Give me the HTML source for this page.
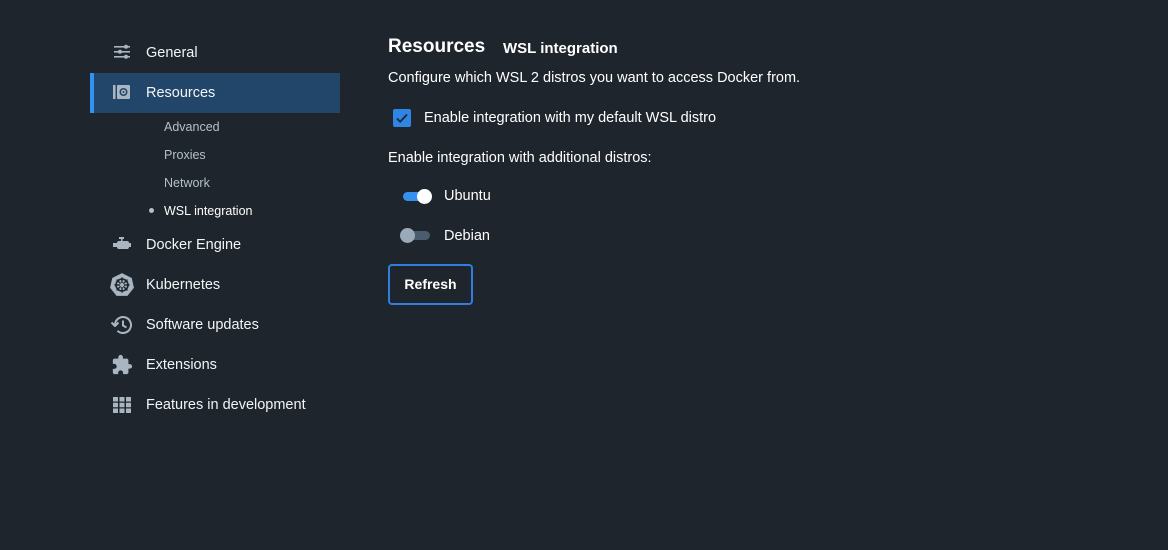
<!DOCTYPE html>
<html><head><meta charset="utf-8"><style>
*{margin:0;padding:0;box-sizing:border-box}
body{width:1168px;height:550px;background:#1e252c;font-family:"Liberation Sans",sans-serif;color:#fff;position:relative;overflow:hidden}
.a{position:absolute;white-space:nowrap}
.item{font-size:14.5px;color:#f2f5f7}
.sub{font-size:12.5px;color:#b4c0ca}
.ic{position:absolute}
</style></head><body>
<div class="a" style="left:90px;top:73px;width:250px;height:40px;background:#22466a"></div>
<div class="a" style="left:90px;top:73px;width:4px;height:40px;background:#3391f2"></div>

<svg class="ic" style="left:112px;top:44px" width="20" height="16" viewBox="0 0 20 16" fill="#a9b6c1"><rect x="2" y="2" width="16" height="1.6"/><rect x="2" y="7" width="16" height="1.6"/><rect x="2" y="12" width="16" height="1.6"/><circle cx="14" cy="2.8" r="2"/><circle cx="8" cy="7.8" r="2"/><circle cx="14" cy="12.8" r="2"/></svg>
<div class="a item" style="left:146px;top:45px">General</div>

<svg class="ic" style="left:112px;top:84px" width="20" height="16" viewBox="0 0 20 16"><rect x="1" y="1" width="2.5" height="14" fill="#a9b6c1"/><rect x="5" y="1" width="13" height="14" rx="1" fill="#a9b6c1"/><circle cx="11.5" cy="8" r="4" fill="#22466a"/><circle cx="11.5" cy="8" r="2.5" fill="#a9b6c1"/><circle cx="11.5" cy="8" r="1" fill="#22466a"/></svg>
<div class="a item" style="left:146px;top:85px">Resources</div>

<div class="a sub" style="left:164px;top:120px">Advanced</div>
<div class="a sub" style="left:164px;top:148px">Proxies</div>
<div class="a sub" style="left:164px;top:176px">Network</div>
<div class="a" style="left:149px;top:208px;width:5px;height:5px;border-radius:50%;background:#b4c0ca"></div>
<div class="a sub" style="left:164px;top:204px;color:#fff">WSL integration</div>

<svg class="ic" style="left:112px;top:236px" width="20" height="16" viewBox="0 0 20 16" fill="#a9b6c1"><rect x="7" y="1" width="5" height="2"/><rect x="9" y="2" width="1.5" height="3"/><rect x="5" y="5" width="12" height="8" rx="2"/><rect x="1" y="7" width="4" height="4"/><rect x="17" y="7" width="2" height="4"/></svg>
<div class="a item" style="left:146px;top:237px">Docker Engine</div>

<svg class="ic" style="left:109px;top:272px" width="26" height="26" viewBox="0 0 24 24"><polygon points="12,1 21,5.5 23,14.5 17,22 7,22 1,14.5 3,5.5" fill="#a9b6c1"/><circle cx="12" cy="12" r="5.5" fill="none" stroke="#1e252c" stroke-width="1.5"/><g stroke="#1e252c" stroke-width="1.3"><line x1="12" y1="5" x2="12" y2="19"/><line x1="5" y1="12" x2="19" y2="12"/><line x1="7" y1="7" x2="17" y2="17"/><line x1="17" y1="7" x2="7" y2="17"/></g><circle cx="12" cy="12" r="1.8" fill="#a9b6c1"/></svg>
<div class="a item" style="left:146px;top:277px">Kubernetes</div>

<svg class="ic" style="left:110px;top:314px" width="24" height="22" viewBox="0 0 24 22" fill="none" stroke="#a9b6c1" stroke-width="2"><path d="M5 11a8 8 0 1 1 2.5 5.8"/><path d="M1.5 8.5L5 12l3.5-3.5" stroke-linejoin="round"/><path d="M13 6.5v5l3.5 2"/></svg>
<div class="a item" style="left:146px;top:317px">Software updates</div>

<svg class="ic" style="left:111px;top:354px" width="22" height="22" viewBox="0 0 24 24" fill="#a9b6c1"><path d="M20.5 11H19V7c0-1.1-.9-2-2-2h-4V3.5a2.5 2.5 0 0 0-5 0V5H4c-1.1 0-2 .9-2 2v3.8h1.5c1.5 0 2.7 1.2 2.7 2.7S5 16.2 3.5 16.2H2V20c0 1.1.9 2 2 2h3.8v-1.5c0-1.5 1.2-2.7 2.7-2.7s2.7 1.2 2.7 2.7V22H17c1.1 0 2-.9 2-2v-4h1.5a2.5 2.5 0 0 0 0-5z"/></svg>
<div class="a item" style="left:146px;top:357px">Extensions</div>

<svg class="ic" style="left:113px;top:397px" width="18" height="16" viewBox="0 0 18 16" fill="#a9b6c1"><rect x="0" y="0" width="5" height="4.5"/><rect x="6.5" y="0" width="5" height="4.5"/><rect x="13" y="0" width="5" height="4.5"/><rect x="0" y="5.75" width="5" height="4.5"/><rect x="6.5" y="5.75" width="5" height="4.5"/><rect x="13" y="5.75" width="5" height="4.5"/><rect x="0" y="11.5" width="5" height="4.5"/><rect x="6.5" y="11.5" width="5" height="4.5"/><rect x="13" y="11.5" width="5" height="4.5"/></svg>
<div class="a item" style="left:146px;top:397px">Features in development</div>

<div class="a" style="left:388px;top:36px;font-size:19px;font-weight:bold">Resources</div>
<div class="a" style="left:503px;top:40px;font-size:15px;font-weight:bold">WSL integration</div>
<div class="a" style="left:388px;top:70px;font-size:14.5px">Configure which WSL 2 distros you want to access Docker from.</div>

<div class="a" style="left:393px;top:109px;width:18px;height:18px;background:#2f85e3;border-radius:2px"></div>
<svg class="ic" style="left:393px;top:109px" width="18" height="18" viewBox="0 0 18 18"><path d="M4 9.5l3.2 3.2L14 5.5" fill="none" stroke="#1a2530" stroke-width="1.8"/></svg>
<div class="a" style="left:424px;top:110px;font-size:14.5px">Enable integration with my default WSL distro</div>
<div class="a" style="left:388px;top:150px;font-size:14.5px">Enable integration with additional distros:</div>

<div class="a" style="left:403px;top:192px;width:27px;height:9px;border-radius:5px;background:#3590ee"></div>
<div class="a" style="left:417px;top:189px;width:15px;height:15px;border-radius:50%;background:#fff"></div>
<div class="a" style="left:444px;top:188px;font-size:14.5px">Ubuntu</div>

<div class="a" style="left:403px;top:231px;width:27px;height:9px;border-radius:5px;background:#4a5c6e"></div>
<div class="a" style="left:400px;top:228px;width:15px;height:15px;border-radius:50%;background:#9aaab8"></div>
<div class="a" style="left:444px;top:228px;font-size:14.5px">Debian</div>

<div class="a" style="left:388px;top:264px;width:85px;height:41px;border:2px solid #2f7ee0;border-radius:4px;font-size:14px;font-weight:bold;text-align:center;line-height:37px">Refresh</div>
</body></html>
